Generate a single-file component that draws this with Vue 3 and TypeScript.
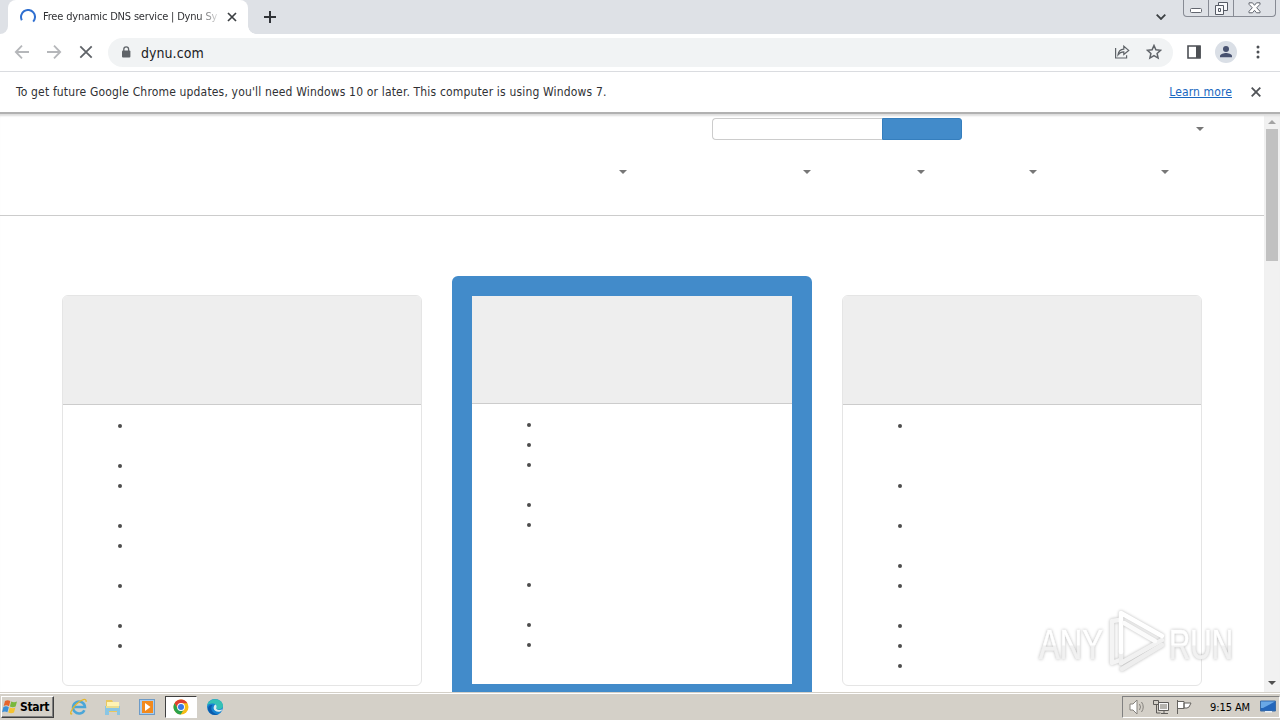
<script setup lang="ts">
interface Plan { id: number; featured: boolean; rows: number[] }

const plans: Plan[] = [
  { id: 1, featured: false, rows: [40, 20, 40, 20, 40, 40, 20, 20] },
  { id: 2, featured: true, rows: [20, 20, 40, 20, 60, 40, 20, 20] },
  { id: 3, featured: false, rows: [60, 40, 40, 20, 40, 20, 20, 20] },
]
const menuWidths: number[] = [627, 184, 114, 112, 132]
</script>

<template>
  <div class="screen">
    <header class="tabstrip">
      <div class="edge"></div>
      <div class="tab">
        <svg class="spinner" width="16" height="16" viewBox="0 0 16 16"><path d="M1.800 11.200A7 7 0 1 1 13.200 12.700" fill="none" stroke="#2f6fd0" stroke-width="2" /></svg>
        <span class="tab-title">Free dynamic DNS service | Dynu Sy</span>
        <svg class="tab-close" width="10" height="10" viewBox="0 0 10 10"><path d="M1 1l8 8M9 1l-8 8" stroke="#3c4043" stroke-width="1.7" /></svg>
      </div>
      <svg class="plus" width="12" height="12" viewBox="0 0 12 12"><path d="M6 0v12M0 6h12" stroke="#303338" stroke-width="2" /></svg>
      <svg class="chevron" width="10" height="6" viewBox="0 0 10 6"><path d="M.7.7L5 5 9.3.7" fill="none" stroke="#3c4043" stroke-width="1.8" /></svg>
      <div class="window-buttons">
        <span class="wb min"><svg width="13" height="5" viewBox="0 0 13 5"><rect x=".5" y=".5" width="11" height="4" rx="1" fill="#fff" stroke="#62666f" /></svg></span>
        <span class="wb max"><svg width="13" height="13" viewBox="0 0 13 13" fill="#f8f9fb" stroke="#555a64"><path d="M3.500.5h9v8h-9z" /><path d="M.5 3.500h8v9h-8z" /><path d="M3.500 6.500h2v3h-2z" /></svg></span>
        <span class="wb close"><svg width="13" height="12" viewBox="0 0 13 12"><path d="M1 .8h3.500l2 2.500 2-2.500H12v1.500L8.700 5.800 12 9.300v1.500H8.500l-2-2.500-2 2.500H1V9.300l3.300-3.500L1 2.300z" fill="#fff" stroke="#62666f" /></svg></span>
      </div>
    </header>

    <div class="toolbar">
      <svg class="nav back" width="16" height="16" viewBox="0 0 16 16"><path d="M15 8H2M8 1.700L1.800 8 8 14.300" fill="none" stroke="#b5b7ba" stroke-width="1.8" /></svg>
      <svg class="nav forward" width="16" height="16" viewBox="0 0 16 16"><path d="M1 8h13M8 1.700L14.200 8 8 14.300" fill="none" stroke="#b5b7ba" stroke-width="1.8" /></svg>
      <svg class="nav stop" width="14" height="14" viewBox="0 0 14 14"><path d="M1.300 1.300l11.400 11.400M12.700 1.300L1.300 12.700" stroke="#5f6368" stroke-width="1.8" /></svg>
      <div class="omnibox">
        <svg class="lock" width="10" height="13" viewBox="0 0 10 13"><rect x="1" y="4.6" width="8.4" height="7" rx="1" fill="#5f6368" /><path d="M2.800 5V3.200a2.400 2.400 0 0 1 4.800 0V5" fill="none" stroke="#5f6368" stroke-width="1.3" /></svg>
        <span class="url">dynu.com</span>
        <svg class="share" width="16" height="14" viewBox="0 0 16 14" fill="none" stroke="#5f6368" stroke-width="1.2"><path d="M1.600 3v10h11V10.300" /><path d="M4 9.800C4.400 6.300 6.300 4.400 9.800 4.100V1.200L14.700 5.400 9.800 9.400V6.800C7.300 6.800 5.500 7.700 4 9.800z" /></svg>
        <svg class="star" width="16" height="16" viewBox="0 0 16 16"><path d="M8 1.500l1.900 4.300 4.700.5-3.500 3.100 1 4.700L8 11.700l-4.100 2.400 1-4.700L1.400 6.300l4.700-.5z" fill="none" stroke="#5f6368" stroke-width="1.5" /></svg>
      </div>
      <svg class="panel" width="14" height="14" viewBox="0 0 14 14"><path d="M1 1h12v12H1z" fill="none" stroke="#4c4f54" stroke-width="1.6" /><path d="M9 1h4.600v12H9z" fill="#4c4f54" /></svg>
      <div class="avatar"><svg width="14" height="14" viewBox="0 0 14 14" fill="#485270"><circle cx="7" cy="4" r="3" /><path d="M1 12.300V11c0-2 4-3 6-3s6 1 6 3v1.300z" /></svg></div>
      <svg class="dots" width="4" height="14" viewBox="0 0 4 14" fill="#4c4f54"><circle cx="2" cy="2" r="1.5" /><circle cx="2" cy="7" r="1.5" /><circle cx="2" cy="12" r="1.5" /></svg>
    </div>

    <div class="infobar">
      <span class="message">To get future Google Chrome updates, you'll need Windows 10 or later. This computer is using Windows 7.</span>
      <a class="learn">Learn more</a>
      <svg class="info-close" width="10" height="10" viewBox="0 0 10 10"><path d="M.7.7l8.600 8.600M9.300.7L.7 9.300" stroke="#505357" stroke-width="1.8" /></svg>
    </div>

    <div class="viewport">
      <main class="page">
        <div class="search-row">
          <div class="search-field"></div>
          <div class="search-button"></div>
          <i class="caret"></i>
        </div>
        <nav class="menu">
          <div v-for="(w, i) in menuWidths" :key="i" class="menu-item" :style="{ width: w + 'px' }"><i class="caret"></i></div>
        </nav>
        <section class="plans">
          <article v-for="plan in plans" :key="plan.id" class="plan" :class="{ featured: plan.featured }">
            <div class="plan-head"></div>
            <ul class="features">
              <li v-for="(h, i) in plan.rows" :key="i" :style="{ height: h + 'px' }"></li>
            </ul>
          </article>
        </section>
      </main>
      <aside class="scrollbar">
        <i class="arrow up"></i>
        <div class="thumb"></div>
        <i class="arrow down"></i>
      </aside>
      <svg class="watermark" width="220" height="76" viewBox="0 0 220 76">
        <defs>
          <linearGradient id="fade" x1="0" y1="0" x2="0" y2="1"><stop offset=".5" stop-color="#fff" /><stop offset=".54" stop-color="#f1f1f1" /></linearGradient>
        </defs>
        <g class="mark">
          <text x="9" y="57" textLength="64" lengthAdjust="spacingAndGlyphs" fill="url(#fade)" stroke="url(#fade)" stroke-width=".6">ANY</text>
          <text x="139" y="57" textLength="64" lengthAdjust="spacingAndGlyphs" fill="url(#fade)" stroke="url(#fade)" stroke-width=".6">RUN</text>
          <g fill="none" stroke-width="4.5" stroke-linejoin="round" stroke-linecap="round">
            <path d="M89 18L82 19V61L90 58" stroke="#f4f4f4" />
            <path d="M91 61V49M92 67L132 43" stroke="#eeeeee" />
            <path d="M91 61L132 38" stroke="#f1f1f1" />
            <path d="M91 50V11L132 34" stroke="#fff" />
            <path d="M94 21L125 39" stroke="#fbfbfb" />
          </g>
        </g>
      </svg>
    </div>

    <footer class="taskbar">
      <div class="start">
        <svg width="17" height="16" viewBox="0 0 17 16"><path d="M3 2c2-1.300 3.500-1 5.300 0L7 7.200C5.200 6.200 3.700 6 1.700 7z" fill="#e8642b" /><path d="M9.200 2.500c2 1 3.700 1 5.800 0l-1.400 5c-2 1-3.800 1-5.700 0z" fill="#79b83b" /><path d="M1.400 8c2-1 3.600-.8 5.400.2l-1.400 5c-1.800-1-3.400-1-5.300 0z" fill="#3b8fd7" /><path d="M7.700 8.600c2 1 3.700 1 5.700 0l-1.400 5c-2 1-3.800 1-5.700 0z" fill="#f5c330" /></svg>
        <span>Start</span>
      </div>
      <div class="launch ie"><svg width="18" height="18" viewBox="0 0 18 18" fill="none"><path d="M14.400 12.200A6 6 0 1 1 15 9H4.500" stroke="#4ba6d8" stroke-width="2.5" /><path d="M2.200 15.600C-1 18 1 11 6.300 6.200 11 1.700 17-.6 16 3.800" stroke="#e5b72c" stroke-width="1.3" /></svg></div>
      <div class="launch"><svg width="18" height="18" viewBox="0 0 18 18"><path d="M2 2h6l1 2h6v10H2z" fill="#e9c75e" /><path d="M3 4h12v5H3z" fill="#fff3b3" /><path d="M1 8h15v9h-3v-4H5v4H1z" fill="#8ac6e4" /><path d="M2 8h13v2H2z" fill="#e9dd91" /></svg></div>
      <div class="launch"><svg width="18" height="18" viewBox="0 0 18 18"><rect x="1.5" y="1.5" width="15" height="15" fill="#a8cdf0" stroke="#6d9bc7" /><rect x="4" y="3" width="11" height="12" fill="#f28a1e" /><path d="M7 5l5.500 4L7 13z" fill="#fff" /></svg></div>
      <div class="launch active"><svg width="16" height="16" viewBox="0 0 16 16"><circle cx="8" cy="8" r="7.5" fill="#f6bd16" /><path d="M1.500 4.200A7.500 7.500 0 0 1 14.500 4.300H8L4.800 9.800z" fill="#df4031" /><path d="M1.500 4.200A7.500 7.500 0 0 0 7.700 15.500L11.200 9.800H4.800z" fill="#2ba24c" /><circle cx="8" cy="8" r="3.9" fill="#fff" /><circle cx="8" cy="8" r="3" fill="#3979e6" /></svg></div>
      <div class="launch edge-app"><svg width="18" height="18" viewBox="0 0 18 18"><circle cx="9" cy="9" r="8" fill="#1683d1" /><path d="M1.100 8C2-1 16-.8 17 7.500c.2 4-5.500 5-7 3 2-3-1-5.500-4-5C3.500 5.700 1.500 6.500 1.100 8z" fill="#35c1b5" /><path d="M6.500 7.200C3.500 10 6 16 12.500 16.200 7 18.500 2 15 2 10.500 2.200 8 4.200 6.500 6.500 7.200z" fill="#0c5bab" /><path d="M9.500 6.500c2 1.500.8 3.500.6 4 1.500 2 4.300 1.800 6.500.8-2 4-8.500 3-9-1 0-2 .8-3.200 1.900-3.800z" fill="#dceef0" /></svg></div>
      <div class="tray">
        <svg width="18" height="16" viewBox="0 0 18 16" fill="none" stroke="#85827d"><path d="M1 5h3l4-4v14l-4-4H1z" fill="#fff" /><path d="M10.500 5q2 3 0 6M12.500 3q3.500 5 0 10" /></svg>
        <svg class="network" width="17" height="16" viewBox="0 0 17 16" fill="#f8f8f8" stroke="#5d5b58"><path d="M5.500 3.500h10v8h-10z" /><path d="M7 5h7v5H7z" fill="#b5b3ae" stroke="none" /><path d="M8 14.500h7M11 12v3M.5 1.500h5v4h-5zM3.500 5v9h4" fill="none" /></svg>
        <svg class="flag" width="17" height="16" viewBox="0 0 17 16" fill="#fff" stroke="#65635f"><path d="M1.500 1v14M2 2.500h6v7H2M8 4h7l-2 4-2 1H8z" /></svg>
        <time>9:15 AM</time>
        <svg class="desktop" width="16" height="14" viewBox="0 0 16 14"><path d="M.5 1h15v10H.5z" fill="#2467bb" stroke="#3b6ca5" /><path d="M1 1.500h14L3 8H1z" fill="#69a8e6" /><path d="M5 11h7v1.500H5z" fill="#e7eff7" /></svg>
      </div>
    </footer>
  </div>
</template>

<style>
html, body { overflow: hidden; background: #fff; }
</style>
<style scoped>
* { box-sizing: border-box; }
svg { display: block; flex: none; }
.screen { width: 1280px; height: 720px; display: flex; flex-direction: column; overflow: hidden; background: #fff; color: #303134; font-family: "DejaVu Sans Condensed", "DejaVu Sans", sans-serif; font-stretch: condensed; }
.tabstrip { height: 34px; flex: none; display: flex; align-items: flex-start; background: #dee1e6; }
.edge { width: 8px; height: 34px; background: linear-gradient(#fff, #fff) bottom / 100% 8px no-repeat; position: relative; }
.edge::after { content: ""; position: absolute; inset: 0; background: #dee1e6; border-radius: 0 0 8px 0; }
.tab { position: relative; width: 240px; height: 34px; display: flex; align-items: center; background: #fff; border-radius: 8px 8px 0 0; padding-left: 12px; }
.tab::after { content: ""; position: absolute; left: 100%; bottom: 0; width: 8px; height: 8px; background: radial-gradient(circle at 100% 0, transparent 7.5px, #fff 8px); }
.tab-title { width: 175px; margin-left: 7px; white-space: nowrap; overflow: hidden; font-size: 11px; letter-spacing: -.18px; line-height: 16px; mask-image: linear-gradient(90deg, #000 155px, transparent 178px); }
.tab-close { margin-left: 9px; }
.plus { margin: 11px 0 0 16px; }
.chevron { margin: 14px 0 0 auto; }
.window-buttons { width: 93px; height: 17px; margin: 0 4px 0 17px; display: flex; border: 1px solid #878b94; border-top: 0; border-radius: 0 0 4px 4px; }
.wb { height: 16px; display: flex; justify-content: center; }
.min { width: 25px; padding-top: 8px; border-right: 1px solid #878b94; }
.max { width: 25px; padding-top: 2px; border-right: 1px solid #878b94; }
.close { flex: 1; padding-top: 2px; }
.toolbar { height: 38px; flex: none; display: flex; align-items: center; border-bottom: 1px solid #dadce0; padding: 0 20px 1px 14px; }
.forward { margin-left: 16px; }
.stop { margin-left: 17px; }
.omnibox { width: 1065px; height: 29px; flex: none; margin-left: 15px; padding: 0 11px 0 13px; display: flex; align-items: center; border-radius: 15px; background: #f1f3f4; }
.url { margin-left: 10px; padding-top: 1px; font-size: 14px; letter-spacing: .05px; line-height: 20px; color: #202124; }
.share { margin-left: auto; }
.star { margin-left: 16px; }
.panel { margin-left: 14px; }
.avatar { width: 22px; height: 22px; flex: none; margin-left: 14px; display: flex; align-items: center; justify-content: center; border-radius: 50%; background: #dadfe6; }
.dots { margin-left: 19px; }
.infobar { height: 42px; flex: none; display: flex; align-items: center; padding: 0 19px 1px 16px; border-bottom: 2px solid #b1b1b1; }
.message { font-size: 12px; letter-spacing: .165px; white-space: nowrap; }
.learn { margin: 0 19px 0 auto; font-size: 12px; letter-spacing: .12px; color: #1967c0; text-decoration: underline; white-space: nowrap; }
.viewport { position: relative; height: 578px; flex: none; display: flex; overflow: hidden; box-shadow: inset 0 3px 2px -1px #ddd; }
.page { width: 1264px; }
.search-row { height: 26px; display: flex; align-items: center; padding: 4px 0 0 712px; }
.search-field { width: 170px; height: 22px; border: 1px solid #ccc; border-right: 0; border-radius: 4px 0 0 4px; background: #fff; }
.search-button { width: 80px; height: 22px; border: 1px solid #357ebd; border-radius: 0 3px 3px 0; background: #428bca; }
.caret { width: 8px; height: 4px; background: #777; clip-path: polygon(0 0, 100% 0, 50% 100%); }
.search-row .caret { margin-left: 234px; }
.menu { height: 76px; display: flex; padding-top: 30px; border-bottom: 1px solid #ccc; }
.menu-item { display: flex; justify-content: flex-end; }
.plans { display: flex; align-items: flex-start; gap: 30px; padding: 60px 62px 0; }
.plan { width: 360px; height: 391px; margin-top: 19px; border: 1px solid #e5e5e5; border-radius: 6px; overflow: hidden; }
.plan-head { height: 109px; background: #eee; border-bottom: 1px solid #ccc; }
.features { list-style: none; margin: 0; padding: 10px 0 0 55px; }
.features li::before { content: ""; display: block; width: 4px; height: 4px; border-radius: 50%; background: #4c4c4c; }
.features li { padding-top: 9px; }
.plan.featured { height: 428px; margin-top: 0; border: 20px solid #428bca; }
.featured .plan-head { height: 108px; }
.scrollbar { width: 16px; display: flex; flex-direction: column; align-items: center; padding: 6px 0 7px; background: #f1f1f1; box-shadow: inset 0 3px 2px -1px #ddd; }
.arrow { width: 8px; height: 4px; }
.arrow.up { background: #a3a3a3; clip-path: polygon(50% 0, 100% 100%, 0 100%); }
.arrow.down { margin-top: auto; background: #505050; clip-path: polygon(0 0, 100% 0, 50% 100%); }
.thumb { width: 12px; height: 132px; margin-top: 5px; background: #c1c1c1; }
.watermark { position: absolute; left: 1030px; top: 488px; overflow: visible; }
.mark { filter: drop-shadow(0 0 1.8px rgb(0 0 0 / 28%)); font: 42px "Liberation Sans", sans-serif; }
.taskbar { height: 28px; flex: none; display: flex; align-items: flex-start; padding-top: 2px; border-top: 1px solid #d4d0c8; background: #d4d0c8; box-shadow: inset 0 1px #fff; }
.start { width: 53px; height: 22px; margin: 1px 0 0 1px; display: flex; align-items: center; border: 1px solid; border-color: #fff #404040 #404040 #fff; box-shadow: inset -1px -1px #808080; color: #000; font-size: 12px; font-weight: 700; letter-spacing: -.3px; }
.start span { margin-left: 1px; }
.launch { width: 32px; height: 22px; margin: 1px 2px 0 0; display: flex; align-items: center; justify-content: center; }
.ie { margin-left: 9px; }
.launch.active { border: 1px solid; border-color: #404040 #fff #fff #404040; background: #fff; }
.edge-app { margin-left: 0; }
.tray { width: 158px; height: 22px; margin: 1px 0 0 auto; display: flex; align-items: center; padding: 0 3px 0 6px; border: 1px solid; border-color: #808080 #fff #fff #808080; color: #000; }
.network { margin-left: 6px; }
.flag { margin-left: 6px; }
.tray time { margin-left: auto; font-size: 11px; letter-spacing: -.1px; white-space: nowrap; }
.desktop { margin-left: 10px; }
</style>
